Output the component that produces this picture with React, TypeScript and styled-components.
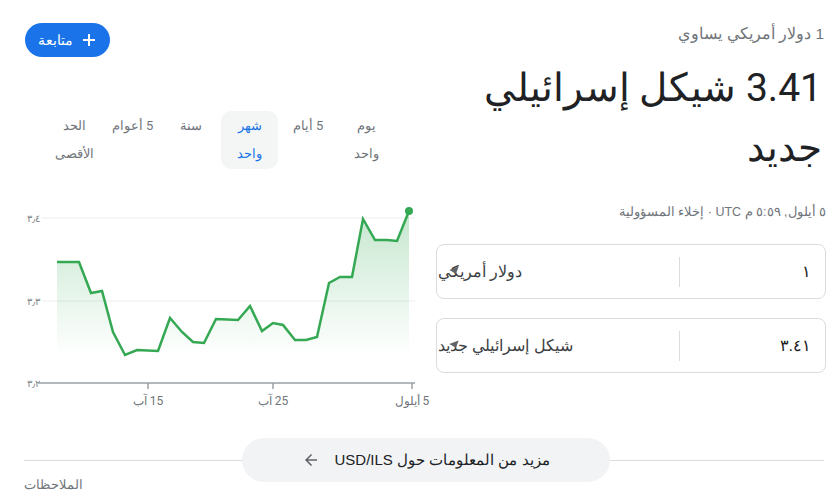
import React from "react";
import styled, { createGlobalStyle } from "styled-components";

const GlobalStyle = createGlobalStyle`
  body {
    margin: 0;
    background: #fff;
    font-family: Arial, "Liberation Sans", sans-serif;
    color: #202124;
  }
`;

const Page = styled.div`
  direction: rtl;
  width: 835px;
  box-sizing: border-box;
  padding: 0 9px 0 15px;
`;

const MainRow = styled.div`
  display: flex;
  gap: 6px;
  align-items: flex-start;
`;

const InfoColumn = styled.div`
  width: 390px;
  flex: none;
  padding-top: 24px;
  display: flex;
  flex-direction: column;
`;

const ChartColumn = styled.div`
  flex: 1;
  display: flex;
  flex-direction: column;
`;

const Subtitle = styled.div`
  padding-right: 2px;
  font-size: 15.5px;
  line-height: 20px;
  color: #70757a;
`;

const Rate = styled.div`
  margin-top: 14px;
  padding-right: 4px;
  font-family: Roboto, Arial, sans-serif;
  font-size: 39px;
  line-height: 60px;
  color: #202124;
`;

const Stamp = styled.div`
  margin-top: 26px;
  font-size: 12.5px;
  line-height: 16px;
  color: #70757a;
`;

const Converter = styled.div`
  margin-top: 24px;
  display: flex;
  flex-direction: column;
  gap: 19px;
`;

const Field = styled.div`
  height: 55px;
  box-sizing: border-box;
  border: 1px solid #dadce0;
  border-radius: 8px;
  display: flex;
  align-items: center;
`;

const Amount = styled.div`
  width: 146px;
  flex: none;
  padding-right: 14px;
  box-sizing: border-box;
  font-size: 16px;
  color: #202124;
  border-left: 1px solid #dadce0;
  height: 30px;
  line-height: 30px;
`;

const CurrencySelect = styled.div`
  position: relative;
  flex: 1;
  display: flex;
  justify-content: flex-end;
  font-size: 16px;
  color: #3c4043;
  padding-left: 1px;
`;

const Caret = styled.span`
  position: absolute;
  left: 13px;
  top: 50%;
  margin-top: -4px;
  width: 0;
  height: 0;
  border-left: 5px solid transparent;
  border-right: 5px solid transparent;
  border-top: 6px solid #5f6368;
  transform: rotate(-20deg);
`;

const FollowButton = styled.button`
  align-self: flex-end;
  margin: 23px 0 0 10px;
  height: 34px;
  padding: 0 14px 0 13px;
  border: none;
  border-radius: 17px;
  background: #1a73e8;
  color: #fff;
  font-family: Roboto, Arial, sans-serif;
  font-size: 13.5px;
  display: flex;
  align-items: center;
  gap: 9px;
`;

const Tabs = styled.div`
  margin: 54px 35px 0 0;
  display: flex;
  gap: 1.5px;
`;

const Tab = styled.div<{ $active?: boolean }>`
  width: 57px;
  padding: 1px 0;
  border-radius: 10px;
  text-align: center;
  font-family: Roboto, Arial, sans-serif;
  font-size: 13px;
  line-height: 28px;
  color: ${(p) => (p.$active ? "#1a73e8" : "#70757a")};
  background: ${(p) => (p.$active ? "#f4f6f6" : "transparent")};
`;

const ChartBox = styled.div`
  margin-top: 31px;
  height: 215px;
`;

const BottomBar = styled.div`
  margin: 35px 2px 0 9px;
  height: 20px;
  padding-left: 4px;
  display: flex;
  justify-content: center;
  align-items: center;
  background: linear-gradient(#dadce0, #dadce0) center / 100% 1px no-repeat;
`;

const MoreButton = styled.button`
  flex: none;
  width: 368px;
  height: 44px;
  border: none;
  border-radius: 22px;
  background: #f1f3f4;
  display: flex;
  justify-content: center;
  align-items: center;
  gap: 14px;
  font-family: Arial, "Liberation Sans", sans-serif;
  font-size: 15px;
  color: #202124;
  direction: rtl;
`;

const Feedback = styled.div`
  margin: 7px 0 0 9px;
  text-align: left;
  font-size: 12.5px;
  line-height: 16px;
  color: #70757a;
`;

const tabs = [
  ["يوم", "واحد"],
  ["5 أيام"],
  ["شهر", "واحد"],
  ["سنة"],
  ["5 أعوام"],
  ["الحد", "الأقصى"],
];

const points: [number, number][] = [
  [42, 62], [64, 62], [76, 93], [87, 91], [98, 132], [110, 155], [122, 150],
  [143, 151], [155, 118], [167, 132], [178, 142], [189, 143], [201, 119],
  [223, 120], [235, 106], [247, 131], [258, 123], [268, 125], [280, 140],
  [291, 140], [302, 137], [314, 83], [325, 77], [337, 77], [348, 19],
  [360, 40], [372, 40], [382, 41], [394, 11],
];

function Chart() {
  const line = points.map(([x, y]) => `${x},${y}`).join(" ");
  const area = `M42,183 L${line.replace(/ /g, " L")} L394,183 Z`;
  const grid = [
    { y: 18, label: "٣٫٤" },
    { y: 101, label: "٣٫٣" },
  ];
  const ticks = [
    { x: 133, label: "15 آب" },
    { x: 258, label: "25 آب" },
    { x: 397, label: "5 أيلول" },
  ];
  return (
    <svg width="415" height="215" viewBox="0 0 415 215" style={{ display: "block" }}>
      <defs>
        <linearGradient id="fillGreen" x1="0" y1="0" x2="0" y2="1">
          <stop offset="0" stopColor="#34a853" stopOpacity="0.28" />
          <stop offset="0.85" stopColor="#34a853" stopOpacity="0" />
        </linearGradient>
      </defs>
      {grid.map((g) => (
        <g key={g.label}>
          <line x1="27" x2="400" y1={g.y} y2={g.y} stroke="#ededed" strokeWidth="1" />
          <text x="25" y={g.y + 4} textAnchor="start" fontSize="10" fill="#80868b" fontFamily="Arial, sans-serif">
            {g.label}
          </text>
        </g>
      ))}
      <text x="25" y="187" textAnchor="start" fontSize="10" fill="#80868b" fontFamily="Arial, sans-serif">
        ٣٫٢
      </text>
      <path d={area} fill="url(#fillGreen)" />
      <polyline points={line} fill="none" stroke="#34a853" strokeWidth="2.5" strokeLinejoin="miter" />
      <circle cx="394" cy="11" r="4" fill="#34a853" />
      <line x1="23" x2="400" y1="183" y2="183" stroke="#9aa0a6" strokeWidth="1.5" />
      {ticks.map((t) => (
        <g key={t.label}>
          <line x1={t.x} x2={t.x} y1="183" y2="189" stroke="#9aa0a6" strokeWidth="1.5" />
          <text x={t.x} y="205" textAnchor="middle" fontSize="12" fill="#70757a" fontFamily="Roboto, Arial, sans-serif">
            {t.label}
          </text>
        </g>
      ))}
    </svg>
  );
}

export default function App() {
  return (
    <>
      <GlobalStyle />
      <Page>
        <MainRow>
          <InfoColumn>
            <Subtitle>1 دولار أمريكي يساوي</Subtitle>
            <Rate>3.41 شيكل إسرائيلي جديد</Rate>
            <Stamp>٥ أيلول, ٥:٥٩ م UTC · إخلاء المسؤولية</Stamp>
            <Converter>
              <Field>
                <Amount>١</Amount>
                <CurrencySelect>
                  دولار أمريكي
                  <Caret />
                </CurrencySelect>
              </Field>
              <Field>
                <Amount>٣.٤١</Amount>
                <CurrencySelect>
                  شيكل إسرائيلي جديد
                  <Caret />
                </CurrencySelect>
              </Field>
            </Converter>
          </InfoColumn>
          <ChartColumn>
            <FollowButton>
              <svg width="14" height="14" viewBox="0 0 14 14">
                <path d="M7 1v12M1 7h12" stroke="#fff" strokeWidth="2" />
              </svg>
              متابعة
            </FollowButton>
            <Tabs>
              {tabs.map((t, i) => (
                <Tab key={i} $active={i === 2}>
                  {t.map((l) => (
                    <div key={l}>{l}</div>
                  ))}
                </Tab>
              ))}
            </Tabs>
            <ChartBox>
              <Chart />
            </ChartBox>
          </ChartColumn>
        </MainRow>
        <BottomBar>
          <MoreButton>
            مزيد من المعلومات حول USD/ILS
            <svg width="18" height="18" viewBox="0 0 24 24">
              <path d="M20 11H7.83l5.59-5.59L12 4l-8 8 8 8 1.41-1.41L7.83 13H20v-2z" fill="#5f6368" />
            </svg>
          </MoreButton>
        </BottomBar>
        <Feedback>الملاحظات</Feedback>
      </Page>
    </>
  );
}
